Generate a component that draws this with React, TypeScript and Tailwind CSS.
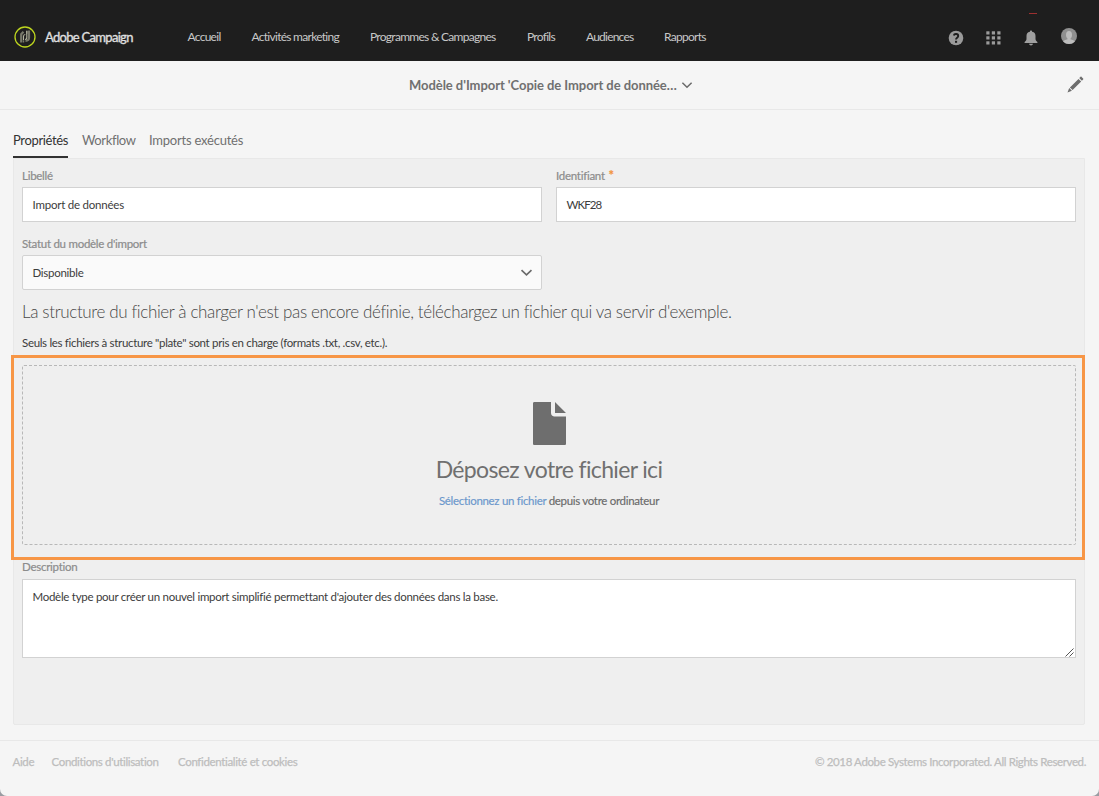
import React from "react";

const navItems = [
  { label: "Accueil", cls: "w-[64px]" },
  { label: "Activités marketing", cls: "w-[118.5px]" },
  { label: "Programmes & Campagnes", cls: "w-[157px]" },
  { label: "Profils", cls: "w-[59px]" },
  { label: "Audiences", cls: "w-[78px] tracking-[-0.78px]" },
  { label: "Rapports", cls: "w-[60px]" },
];

function Logo() {
  return (
    <svg width="22" height="22" viewBox="0 0 22 22" fill="none">
      <circle cx="11" cy="11" r="10" stroke="#bdd51f" strokeWidth="1.3" />
      <path d="M7.200 16.500V8.200L9.500 5.800" stroke="#77786a" strokeWidth="2.200" />
      <path d="M9.500 16.500v-2.300M12.800 4.500v3.300" stroke="#77786a" strokeWidth="1.400" />
      <path d="M15 4.500v7c0 2-1.500 3.300-3.500 3.300" stroke="#77786a" strokeWidth="2.200" />
      <path d="M12.800 5v6.500c0 1.300-.8 2-1.800 2M9.500 14V10.500c0-1.200.7-2 1.800-2" stroke="#b4b6a0" strokeWidth="1.100" />
    </svg>
  );
}

function HelpIcon() {
  return (
    <svg width="16" height="16" viewBox="0 0 16 16">
      <circle cx="8" cy="8" r="7.300" fill="#9a9a9a" />
      <path d="M5.800 5.500C6.200 3.300 10.300 3.500 10.200 6c0 1.700-2.200 1.700-2.200 3.500" fill="none" stroke="#1e1e1e" strokeWidth="1.900" />
      <rect x="7" y="10.800" width="2.100" height="2" fill="#1e1e1e" />
    </svg>
  );
}

function GridIcon() {
  return (
    <svg width="15" height="14" viewBox="0 0 15 14" fill="#9a9a9a">
      {[0, 5, 10].map((y) => [0, 5.500, 11].map((x) => <rect key={`${x}-${y}`} x={x + 0.300} y={y + 0.300} width="3.200" height="3.200" />))}
    </svg>
  );
}

function BellIcon() {
  return (
    <svg width="14" height="16" viewBox="0 0 14 16" fill="#a0a0a0">
      <path d="M7 .5c.7 0 1.100.4 1.100 1.200C10.700 2.200 11.500 4 11.500 6v2.500c0 1.800.6 2.400 1.900 3.500v1H.6v-1C1.900 10.900 2.500 10.300 2.500 8.500V6c0-2 .8-3.800 3.400-4.300C5.900.9 6.300.5 7 .5Z" />
      <path d="M5 13.800h4c-.3 1-1 1.600-2 1.600s-1.700-.6-2-1.600Z" />
    </svg>
  );
}

function Avatar() {
  return (
    <svg width="16" height="16" viewBox="0 0 16 16">
      <defs><clipPath id="disc"><circle cx="8" cy="8" r="8" /></clipPath></defs>
      <g clipPath="url(#disc)">
        <rect width="16" height="16" fill="#909090" />
        <ellipse cx="8" cy="6.800" rx="3" ry="3.900" fill="#bdbdbd" />
        <path d="M6.500 9.500h3v1.800c2 .6 3.800 1 4.300 2.200L12 17H4l-1.800-3.500c.5-1.200 2.300-1.600 4.300-2.200Z" fill="#bdbdbd" />
      </g>
    </svg>
  );
}

function Pencil() {
  return (
    <svg width="17" height="17" viewBox="0 0 17 17" fill="#6e6e6e">
      <path d="M13.400.9c.4-.4.8-.4 1.200 0l1.500 1.500c.4.4.4.8 0 1.200l-1.200 1.200-2.700-2.700ZM11.500 2.900l2.700 2.700-8.600 8.500-2.700-2.700ZM2.200 12.100l2.700 2.700L.5 16.500Z" />
    </svg>
  );
}

function Chevron({ size }: { size: number }) {
  return (
    <svg width={size} height={size} viewBox="0 0 12 12" fill="none" stroke="#6a6a6a" strokeWidth="1.500">
      <path d="M1.400 3.800 6 8.200l4.600-4.400" />
    </svg>
  );
}

const label = "whitespace-nowrap text-[11.5px] leading-4 tracking-[-0.27px] text-[#8c8c8c] [-webkit-text-stroke:0.2px]";
const field = "flex h-[35px] items-center border border-[#d2d2d2] px-[9.5px] text-[11.5px] text-[#3c3c3c]";

export default function App() {
  return (
    <div className="h-[796px] w-[1099px] bg-[#9a9ca2]">
      <div className="flex h-[796px] w-[1099px] flex-col overflow-hidden rounded-b-[7px] bg-[#f5f5f5] font-['Lato',sans-serif] text-[#4b4b4b]">
        <header className="flex h-[61px] shrink-0 items-center bg-[#1e1e1e] pt-[13px] pl-[14px] pr-[22px]">
          <Logo />
          <span className="ml-[9px] mt-px w-[142.5px] whitespace-nowrap text-[13px] tracking-[-0.7px] text-[#e0e0e0] [-webkit-text-stroke:0.3px]">Adobe Campaign</span>
          <nav className="flex whitespace-nowrap text-[12px] tracking-[-0.72px] text-[#c8c8c8]">
            {navItems.map((n) => (
              <a key={n.label} className={n.cls}>{n.label}</a>
            ))}
          </nav>
          <div className="ml-auto flex items-center">
            <span className="mt-px"><HelpIcon /></span>
            <span className="ml-[22px] mt-px"><GridIcon /></span>
            <span className="relative ml-[23px] mt-[2px]">
              <BellIcon />
              <i className="absolute left-[5px] -top-[17px] h-px w-[8px] bg-[#9c3030]" />
            </span>
            <span className="ml-[23px] -mt-[3px]"><Avatar /></span>
          </div>
        </header>

        <div className="flex h-[49px] shrink-0 items-center border-b border-[#e8e8e8]">
          <span className="ml-[409px] mt-[2px] whitespace-nowrap text-[13px] font-bold tracking-[-0.05px] text-[#707070]">Modèle d'Import 'Copie de Import de donnée…</span>
          <span className="ml-[4px] -mt-px"><Chevron size={12} /></span>
          <span className="-mt-[2px] ml-auto mr-[15px]"><Pencil /></span>
        </div>

        <nav className="ml-[13px] mt-[16px] flex h-[32px] shrink-0 whitespace-nowrap text-[13px] leading-[29px] tracking-[-0.3px] text-[#707070]">
          <a className="h-[32px] w-[55px] border-b-2 border-[#323232] tracking-[-0.35px] text-[#323232]">Propriétés</a>
          <a className="ml-[14px] w-[53px] tracking-[-0.37px]">Workflow</a>
          <a className="ml-[14px] tracking-[-0.22px]">Imports exécutés</a>
        </nav>

        <main className="ml-[13px] flex h-[567px] w-[1072px] shrink-0 flex-col rounded-b-[2px] border border-[#e8e8e8] bg-[#efefef] pt-[9px]">
          <div className="ml-[8px] flex gap-[14px]">
            <div className="w-[520px]">
              <div className={label}>Libellé</div>
              <div className={`${field} mt-[3px] bg-white tracking-[-0.22px]`}>Import de données</div>
            </div>
            <div className="w-[520px]">
              <div className={label}>Identifiant <span className="ml-[1px] text-[13px] font-bold leading-3 text-[#f29440]">*</span></div>
              <div className={`${field} mt-[3px] bg-white tracking-[-0.95px]`}>WKF28</div>
            </div>
          </div>
          <div className="ml-[8px] mt-[14px] w-[520px]">
            <div className={label}>Statut du modèle d'import</div>
            <div className={`${field} mt-[3px] justify-between rounded-[2px] bg-[#fafafa] pr-[8px] tracking-[-0.28px]`}>Disponible<Chevron size={13} /></div>
          </div>
          <div className="ml-[8px] mt-[9px] whitespace-nowrap text-[17px] font-light leading-[26px] tracking-[-0.37px] text-[#484848]">La structure du fichier à charger n'est pas encore définie, téléchargez un fichier qui va servir d'exemple.</div>
          <div className="ml-[8px] mt-[10px] whitespace-nowrap text-[11.5px] leading-4 tracking-[-0.32px] text-[#3c3c3c]">Seuls les fichiers à structure "plate" sont pris en charge (formats .txt, .csv, etc.).</div>
          <section className="-ml-[3px] mt-[4px] h-[205px] w-[1074px] shrink-0 border-[3px] border-[#f79646] pl-[8px] pr-[6px] pt-[7px]">
            <div className="flex h-[180px] flex-col items-center rounded-[2px] border border-dashed border-[#b8b8b8] pt-[36px]">
              <svg width="33" height="43" viewBox="0 0 33 43" fill="#6e6e6e">
                <path d="M1.500 0H18v11c0 2 1.500 3.500 3.500 3.500H33v27c0 1-.5 1.500-1.500 1.500h-30C.5 43 0 42.500 0 41.500v-40C0 .5.500 0 1.500 0ZM22 0l11 11H22Z" />
              </svg>
              <div className="mt-[10px] whitespace-nowrap text-[23px] leading-[28px] tracking-[-0.64px] text-[#707070]">Déposez votre fichier ici</div>
              <div className="mt-[10px] whitespace-nowrap text-[11.5px] leading-4 tracking-[-0.31px] text-[#6a6a6a] [-webkit-text-stroke:0.15px]"><a className="text-[#6b97cc]">Sélectionnez un fichier</a> depuis votre ordinateur</div>
            </div>
          </section>
          <div className={`${label} ml-[8px] -mt-[1px]`}>Description</div>
          <div className="relative ml-[8px] mt-[4px] h-[79px] w-[1054px] border border-[#d2d2d2] bg-white px-[9.5px] pt-[9px] text-[11.5px] leading-4 tracking-[-0.28px] text-[#3c3c3c]">
            <span>Modèle type pour créer un nouvel import simplifié permettant d'ajouter des données dans la base.</span>
            <svg className="absolute bottom-0 right-[1px]" width="9" height="9" viewBox="0 0 9 9" stroke="#555" strokeWidth="1"><path d="M.5 8.500l8-8M4.500 8.500l4-4" /></svg>
          </div>
        </main>

        <footer className="mt-[15px] flex h-[56px] shrink-0 items-start whitespace-nowrap border-t border-[#e8e8e8] pl-[12.5px] pr-[13px] pt-[13px] text-[11.5px] leading-4 tracking-[-0.35px] text-[#bdbdbd] [-webkit-text-stroke:0.25px]">
          <a className="w-[39px]">Aide</a>
          <a className="w-[126.5px]">Conditions d'utilisation</a>
          <a>Confidentialité et cookies</a>
          <span className="ml-auto tracking-[-0.38px]">© 2018 Adobe Systems Incorporated. All Rights Reserved.</span>
        </footer>
      </div>
    </div>
  );
}
